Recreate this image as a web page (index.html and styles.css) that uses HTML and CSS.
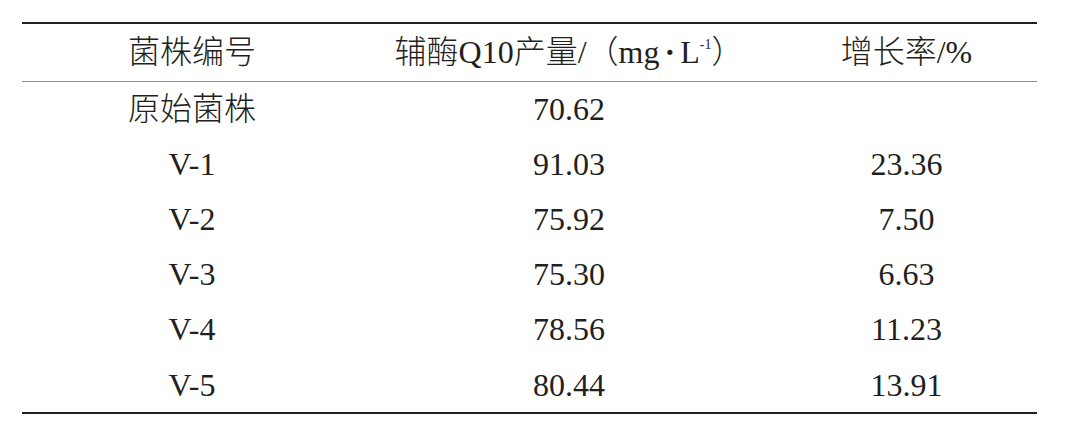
FILE: index.html
```html
<!DOCTYPE html>
<html lang="zh-CN">

<head>
    <meta charset="UTF-8">
    <title>菌株辅酶Q10产量</title>
    <link rel="stylesheet" href="styles.css">
</head>

<body>
    <table class="data-table">
        <colgroup>
            <col class="col-strain">
            <col class="col-yield">
            <col class="col-rate">
        </colgroup>
        <thead>
            <tr>
                <th>菌株编号</th>
                <th>辅酶Q10产量/（mg<span class="dot">·</span>L<sup>-1</sup>）</th>
                <th>增长率/%</th>
            </tr>
        </thead>
        <tbody>
            <tr>
                <td>原始菌株</td>
                <td>70.62</td>
                <td></td>
            </tr>
            <tr>
                <td>V-1</td>
                <td>91.03</td>
                <td>23.36</td>
            </tr>
            <tr>
                <td>V-2</td>
                <td>75.92</td>
                <td>7.50</td>
            </tr>
            <tr>
                <td>V-3</td>
                <td>75.30</td>
                <td>6.63</td>
            </tr>
            <tr>
                <td>V-4</td>
                <td>78.56</td>
                <td>11.23</td>
            </tr>
            <tr>
                <td>V-5</td>
                <td>80.44</td>
                <td>13.91</td>
            </tr>
        </tbody>
    </table>
</body>

</html>
```

FILE: styles.css
```css
* {
    box-sizing: border-box;
}

body {
    margin: 0;
    background-color: #ffffff;
    color: #231f20;
    font-family: 'Liberation Serif', 'Noto Sans CJK SC', serif;
}

.data-table {
    width: 1015px;
    margin: 22px 0 0 22px;
    border-collapse: collapse;
    table-layout: fixed;
    font-size: 32px;
}

.col-strain {
    width: 340px;
}

.col-yield {
    width: 414px;
}

.data-table th,
.data-table td {
    padding: 0;
    text-align: center;
    font-weight: 300;
    line-height: 1;
}

.data-table th {
    height: 58px;
    border-top: 2px solid #231f20;
    border-bottom: 1px solid #8c8c8c;
}

.data-table td {
    height: 55px;
}

.data-table tbody tr:last-child td {
    height: 57px;
    padding-top: 2px;
    border-bottom: 2px solid #231f20;
}

.data-table sup {
    font-size: 14px;
    vertical-align: 14px;
    line-height: 0;
}

.dot {
    margin: 0 5px;
    font-weight: bold;
}
```
